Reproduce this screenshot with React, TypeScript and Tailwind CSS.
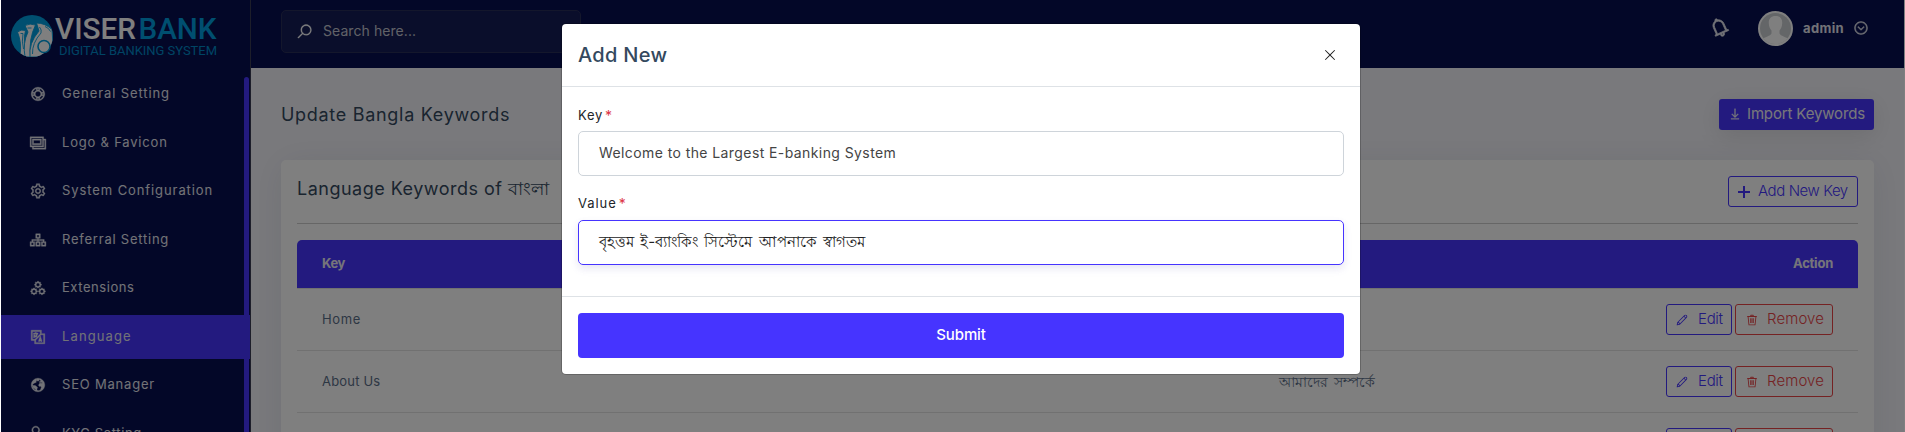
import React from "react";
import type { IconType } from "react-icons";
import {
  LiaBell,
  LiaChevronCircleDownSolid,
  LiaCogSolid,
  LiaCogsSolid,
  LiaDownloadSolid,
  LiaGlobeSolid,
  LiaImages,
  LiaLanguageSolid,
  LiaLifeRing,
  LiaPenSolid,
  LiaSearchSolid,
  LiaSitemapSolid,
  LiaTimesSolid,
  LiaTrashSolid,
  LiaUserCheckSolid,
} from "react-icons/lia";

type MenuItem = { label: string; icon: IconType; spacing: string; active?: boolean };

const menu: MenuItem[] = [
  { label: "General Setting", icon: LiaLifeRing, spacing: "tracking-[0.9px]" },
  { label: "Logo & Favicon", icon: LiaImages, spacing: "tracking-[0.8px]" },
  { label: "System Configuration", icon: LiaCogSolid, spacing: "tracking-[0.91px]" },
  { label: "Referral Setting", icon: LiaSitemapSolid, spacing: "tracking-[0.77px]" },
  { label: "Extensions", icon: LiaCogsSolid, spacing: "tracking-[0.55px]" },
  { label: "Language", icon: LiaLanguageSolid, spacing: "tracking-[1.12px]", active: true },
  { label: "SEO Manager", icon: LiaGlobeSolid, spacing: "tracking-[0.8px]" },
  { label: "KYC Setting", icon: LiaUserCheckSolid, spacing: "tracking-[0.6px]" },
];

const rows = [
  { key: "Home", value: "হোম", spacing: "tracking-[0.6px]" },
  { key: "About Us", value: "আমাদের সম্পর্কে", spacing: "tracking-[0.18px]" },
  { key: "Contact", value: "যোগাযোগ", spacing: "tracking-[0.3px]" },
];

function Logo() {
  return (
    <svg width="210" height="46" viewBox="0 0 210 46" fontFamily="Roboto, sans-serif">
      <defs>
        <clipPath id="coin">
          <circle cx="21" cy="21" r="21" />
        </clipPath>
      </defs>
      <circle cx="21" cy="21" r="21" fill="#009fe0" />
      <g clipPath="url(#coin)" fill="#fff" stroke="#009fe0" strokeWidth="0.9" strokeLinejoin="round">
        <path d="M6.500 17 Q10 14 14.500 15.500 Q11.500 26 16 42 L9 40 Q11 28 6.500 17z" />
        <path d="M14 10.500 Q19 8 24.500 10 Q17.500 24 19.500 42 L14 42 Q11.500 28 17 17z" />
        <path d="M25.500 8 Q34 8 41 14.500 L42 30 L34 42 L19 42 Q17.500 28 28 16z" />
        <path d="M28.500 12 Q31 15 30 18 Q21 28 21.500 39 M34 11.500 Q38 13 39.500 16.500 M16.500 13 L20.500 13 M9.500 18.500 L12 18.500 Q10.500 26 12.500 34" fill="none" />
      </g>
      <circle cx="33" cy="31.500" r="6" fill="#fff" stroke="#009fe0" strokeWidth="1.6" />
      <text x="44" y="24" fontSize="29" fontWeight="500" fill="#fff" textLength="81" lengthAdjust="spacingAndGlyphs">VISER</text>
      <text x="127.500" y="24" fontSize="29" fontWeight="500" fill="#009fe0" textLength="78" lengthAdjust="spacingAndGlyphs">BANK</text>
      <text x="48" y="40" fontSize="13" fill="#0088c8" textLength="158" lengthAdjust="spacing">DIGITAL BANKING SYSTEM</text>
    </svg>
  );
}

function Sidebar() {
  return (
    <aside className="relative h-[432px] w-[250px] shrink-0 overflow-hidden border-r border-[#3a3d54] bg-[#060f50]">
      <div className="h-[73px] pt-[15px] pl-[10px]">
        <Logo />
      </div>
      <ul className="-mt-px flex flex-col gap-[4.5px]">
        {menu.map(({ label, icon: Icon, spacing, active }) => (
          <li
            key={label}
            className={
              active
                ? "flex h-11 items-center gap-[15px] bg-[#4634ff] pl-7 text-[#e4e5ee]"
                : "flex h-11 items-center gap-[15px] pl-7 text-[#e4e5ee]"
            }
          >
            <Icon className="h-[18px] w-[18px] stroke-[0.7px]" />
            <span className={`text-[13px] font-normal whitespace-nowrap ${spacing}`}>{label}</span>
          </li>
        ))}
      </ul>
      <div className="absolute top-[77px] right-px h-[360px] w-[5px] rounded-t-[3px] bg-[#4634ff]" />
    </aside>
  );
}

function Avatar() {
  return (
    <svg width="35" height="35" viewBox="0 0 35 35">
      <defs>
        <clipPath id="avatar">
          <circle cx="17.5" cy="17.5" r="15.5" />
        </clipPath>
      </defs>
      <circle cx="17.5" cy="17.5" r="17.5" fill="#fff" />
      <circle cx="17.5" cy="17.5" r="15.5" fill="#c9ccd0" />
      <g clipPath="url(#avatar)" fill="#fff">
        <path d="M17.5 5c4.5 0 7 2.800 6.700 7.200-.1 3.600-1.500 5.800-2.700 7.300v3c.8 2.500 7 3.500 9.500 6L31 36H4l0-7.500c2.500-2.500 8.700-3.500 9.500-6v-3c-1.200-1.500-2.600-3.700-2.700-7.300C10.500 7.800 13 5 17.500 5z" />
      </g>
    </svg>
  );
}

function Header() {
  return (
    <header className="flex h-[68px] items-start justify-between bg-[#060f50] pr-[35px] pl-[30px]">
      <div className="mt-[10px] flex h-[43px] w-[300px] items-center gap-[10px] rounded-[5px] border border-[#292e59] bg-[#141c56] pl-[14px] text-[#c3c5cf]">
        <LiaSearchSolid className="h-[17px] w-[17px] stroke-[0.6px] text-white" />
        <span className="-mt-[2px] text-[14px] tracking-[0.07px]">Search here...</span>
      </div>
      <div className="mt-[11px] flex h-[35px] items-center text-[#e4e5ee]">
        <LiaBell className="mr-[27px] h-[23px] w-[23px] -translate-y-px -rotate-[24deg] stroke-[0.9px]" />
        <Avatar />
        <span className="ml-[10px] text-[13px] font-bold tracking-[0.36px]">admin</span>
        <LiaChevronCircleDownSolid className="ml-[9px] h-[16px] w-[16px] -translate-y-px stroke-[0.9px]" />
      </div>
    </header>
  );
}

function RowActions() {
  return (
    <div className="flex gap-[3px]">
      <button className="flex h-[31px] w-[66px] items-center rounded-[3px] border border-[#4634ff] pl-2 text-[15px] font-light tracking-[-0.3px] text-[#4634ff]">
        <LiaPenSolid className="mr-[9px] h-[14px] w-[14px]" />
        Edit
      </button>
      <button className="flex h-[31px] w-[98px] items-center rounded-[3px] border border-[#ea4446] pl-[9px] text-[15px] font-light tracking-[0.1px] text-[#ea4446]">
        <LiaTrashSolid className="mr-[8px] h-[14px] w-[14px]" />
        Remove
      </button>
    </div>
  );
}

function Content() {
  return (
    <main className="h-[364px] overflow-hidden bg-[#f3f3f9] px-[30px]">
      <div className="flex h-[92px] items-center justify-between">
        <h6 className="text-[18px] font-normal tracking-[0.7px] text-[#34495e]">Update Bangla Keywords</h6>
        <button className="flex h-[31px] w-[155px] items-center rounded-[3px] bg-[#4634ff] pl-[9px] text-[15px] tracking-[-0.15px] whitespace-nowrap text-[#f0f0f5] shadow-[0_5px_25px_rgba(0,0,0,0.1)]">
          <LiaDownloadSolid className="mr-[5px] h-[14px] w-[14px] stroke-[0.8px]" />
          Import Keywords
        </button>
      </div>
      <section className="h-[400px] rounded-[5px] bg-white px-4 pt-4 shadow-[0_3px_35px_rgba(18,38,63,0.08)]">
        <div className="flex h-[48px] items-start justify-between border-b border-[#cccccc]">
          <h5 className="flex h-[25px] items-center text-[18px] font-normal tracking-[0.49px] whitespace-pre text-[#34495e]">
            Language Keywords of <span className="tracking-normal">বাংলা</span>
          </h5>
          <button className="flex h-[31px] w-[130px] items-center rounded-[3px] border border-[#4634ff] pl-[9px] text-[15px] font-light tracking-[-0.42px] whitespace-nowrap text-[#4634ff]">
            <svg className="mr-[8px]" width="12" height="12" viewBox="0 0 12 12" stroke="currentColor" strokeWidth="2">
              <path d="M6 0v12M0 6h12" />
            </svg>
            Add New Key
          </button>
        </div>
        <div className="mt-4 flex h-12 items-center justify-between rounded-t-[5px] bg-[#4634ff] px-[25px] text-[13px] font-bold text-[#ecebf5]">
          <span className="tracking-[-0.39px]">Key</span>
          <span className="tracking-[-0.23px]">Action</span>
        </div>
        <div className="border-t border-[#e2e2e2]">
          {rows.map((row) => (
            <div
              key={row.key}
              className="grid h-[62px] grid-cols-[957px_1fr_auto] items-center border-b border-[#e2e2e2] px-[25px] text-[13px] text-[#5b6e88]"
            >
              <span className={row.spacing}>{row.key}</span>
              <span className="text-[14px] [word-spacing:2px]">{row.value}</span>
              <RowActions />
            </div>
          ))}
        </div>
      </section>
    </main>
  );
}

function Modal() {
  return (
    <div className="absolute inset-0 bg-black/50">
      <div className="mt-6 ml-[562px] flex h-[350px] w-[798px] flex-col rounded-[4px] bg-white shadow-[0_0_0_1px_rgba(0,0,0,0.2)]">
        <div className="flex h-[63px] items-center justify-between border-b border-[#dee2e6] pr-[22px] pl-4">
          <h5 className="text-[20px] font-medium tracking-[0.3px] text-[#34495e]">Add New</h5>
          <LiaTimesSolid className="h-[16px] w-[16px] text-[#222]" />
        </div>
        <div className="flex grow flex-col px-4 pt-[18px]">
          <label className="flex h-[21px] items-center text-[13px] font-normal tracking-[0.75px] text-[#212529]">
            Key<span className="ml-[2px] text-[14px] text-[#dc3545]">*</span>
          </label>
          <div className="mt-[5px] flex h-[45px] items-center rounded-[5px] border border-[#ced4da] px-5 pb-[2px] text-[14px] tracking-[0.41px] text-[#444]">
            Welcome to the Largest E-banking System
          </div>
          <label className="mt-[17px] flex h-[21px] items-center text-[13px] font-normal tracking-[0.95px] text-[#212529]">
            Value<span className="ml-[2px] text-[14px] text-[#dc3545]">*</span>
          </label>
          <div className="mt-[6px] flex h-[45px] items-center rounded-[5px] border border-[#4634ff] px-5 text-[15px] text-[#222] shadow-[0_3px_9px_rgba(50,50,9,0.05),0_4px_8px_rgba(115,103,240,0.1)] [word-spacing:2px]">
            বৃহত্তম ই-ব্যাংকিং সিস্টেমে আপনাকে স্বাগতম
          </div>
        </div>
        <div className="h-[78px] border-t border-[#dee2e6] px-4 pt-4">
          <button className="h-[45px] w-full rounded-[4px] bg-[#4634ff] text-[15px] font-medium tracking-[-0.1px] text-white">Submit</button>
        </div>
      </div>
    </div>
  );
}

export default function App() {
  return (
    <div className="relative h-[432px] w-[1905px] overflow-hidden bg-white font-['Inter','Noto_Sans',sans-serif]">
      <div className="flex h-full pr-px pl-px">
        <Sidebar />
        <div className="min-w-0 grow">
          <Header />
          <Content />
        </div>
      </div>
      <Modal />
      <div className="absolute inset-y-0 left-0 w-px bg-white" />
    </div>
  );
}
